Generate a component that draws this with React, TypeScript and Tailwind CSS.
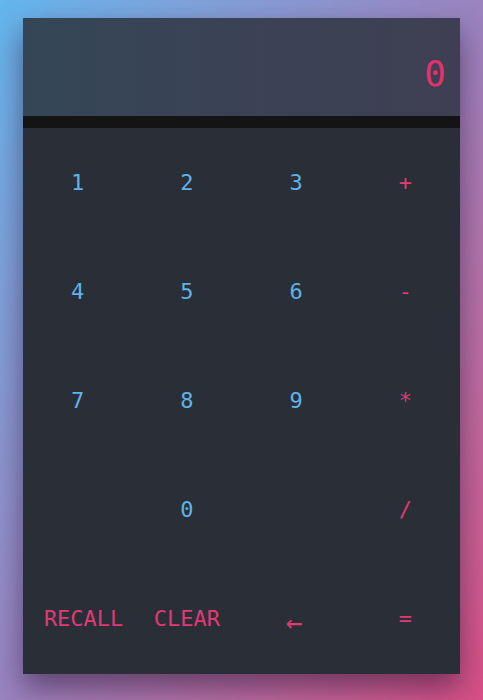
import { useState } from 'react'

const keys: { label: string; kind: 'num' | 'op' | 'blank' }[] = [
  { label: '1', kind: 'num' },
  { label: '2', kind: 'num' },
  { label: '3', kind: 'num' },
  { label: '+', kind: 'op' },
  { label: '4', kind: 'num' },
  { label: '5', kind: 'num' },
  { label: '6', kind: 'num' },
  { label: '-', kind: 'op' },
  { label: '7', kind: 'num' },
  { label: '8', kind: 'num' },
  { label: '9', kind: 'num' },
  { label: '*', kind: 'op' },
  { label: '', kind: 'blank' },
  { label: '0', kind: 'num' },
  { label: '', kind: 'blank' },
  { label: '/', kind: 'op' },
  { label: 'RECALL', kind: 'op' },
  { label: 'CLEAR', kind: 'op' },
  { label: '←', kind: 'op' },
  { label: '=', kind: 'op' },
]

export default function App() {
  const [display, setDisplay] = useState('0')

  const press = (k: string) => {
    if (k === 'CLEAR') return setDisplay('0')
    if (k === '←') return setDisplay((d) => (d.length > 1 ? d.slice(0, -1) : '0'))
    if (k === '=' || k === 'RECALL') return
    setDisplay((d) => (d === '0' ? k : d + k))
  }

  return (
    <div className="min-h-[700px] w-full bg-gradient-to-br from-[#62b6ee] via-[#9a84c0] to-[#d94f86] pt-[18px] font-['DejaVu_Sans_Mono',monospace]">
      <div className="mx-auto w-[437px] bg-[#2a2f37] shadow-[0_14px_28px_rgba(30,10,40,0.5)]">
        <div className="flex h-[98px] items-center justify-end bg-gradient-to-r from-[#344656] to-[#3f3f53] pr-[14px] pt-[14px]">
          <span className="text-[36px] leading-none text-[#e0336e]">{display}</span>
        </div>
        <div className="h-[12px] bg-[#141414]" />
        <div className="grid h-[546px] grid-cols-4 grid-rows-5">
          {keys.map((k, i) => (
            <button
              key={i}
              type="button"
              onClick={() => k.label && press(k.label)}
              className={
                'flex items-center justify-center leading-none ' +
                (k.kind === 'num' ? 'text-[#5eb3e8] ' : 'text-[#df3a73] ') +
                (k.label === 'RECALL'
                  ? 'pl-[12px] text-[22px]'
                  : k.label === '←'
                    ? 'pt-[8px] pr-[4px] text-[28px]'
                    : 'text-[22px]')
              }
            >
              {k.label}
            </button>
          ))}
        </div>
      </div>
    </div>
  )
}
